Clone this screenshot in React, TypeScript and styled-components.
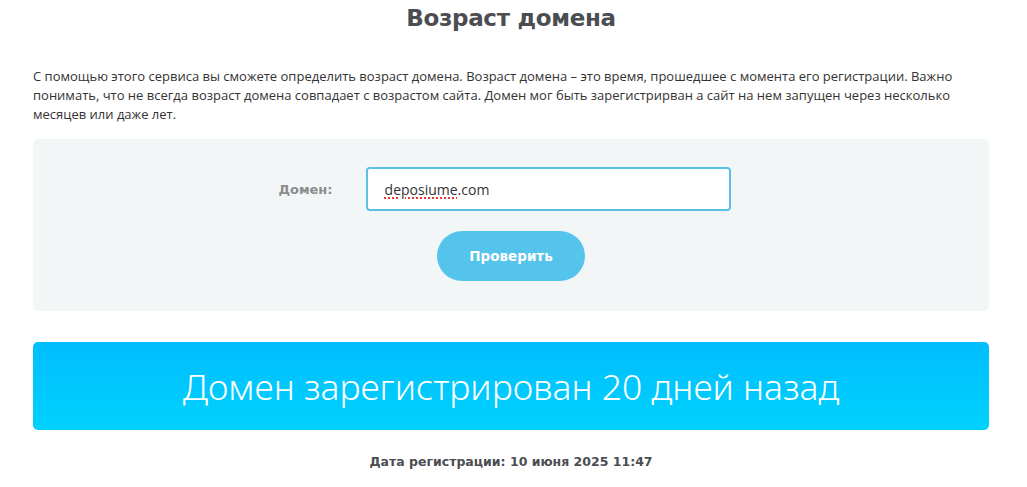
import styled, { createGlobalStyle } from 'styled-components';

const GlobalStyle = createGlobalStyle`
  html, body {
    margin: 0;
    padding: 0;
    background: #ffffff;
  }
  body {
    font-family: 'Open Sans', 'Liberation Sans', sans-serif;
    color: #333;
  }
`;

const Page = styled.div`
  padding: 0 38px 10px 33px;
`;

const Title = styled.h1`
  margin: 0;
  padding-top: 3px;
  text-align: center;
  font-family: 'DejaVu Sans', sans-serif;
  font-size: 23px;
  font-weight: 700;
  line-height: 30px;
  color: #4b4d52;
  letter-spacing: -0.3px;
`;

const Intro = styled.p`
  margin: 34px 0 0;
  font-size: 13px;
  line-height: 19px;
  color: #333;
`;

const FormPanel = styled.div`
  margin-top: 15px;
  background: #f3f6f7;
  border-radius: 5px;
  padding: 28px 0 30px;
  display: flex;
  flex-direction: column;
  align-items: center;
  gap: 20px;
`;

const FieldRow = styled.div`
  display: flex;
  align-items: center;
  gap: 33px;
  margin-left: -13px;
`;

const Label = styled.label`
  font-family: 'DejaVu Sans', sans-serif;
  font-size: 13px;
  font-weight: 700;
  color: #8a8c8f;
`;

const Input = styled.div`
  box-sizing: border-box;
  width: 365px;
  height: 44px;
  border: 2px solid #5bc0e8;
  border-radius: 4px;
  background: #fff;
  padding: 0 17px;
  display: flex;
  align-items: center;
  font-size: 14px;
  color: #333;
`;

const Misspelled = styled.span`
  text-decoration: underline dotted #e53935;
  text-underline-offset: 3px;
  text-decoration-thickness: 1.5px;
`;

const CheckButton = styled.button`
  width: 148px;
  height: 50px;
  border: none;
  border-radius: 25px;
  background: #55c4ec;
  color: #fff;
  font-family: 'DejaVu Sans', sans-serif;
  font-size: 13.5px;
  font-weight: 700;
  cursor: pointer;
`;

const ResultBanner = styled.div`
  margin-top: 31px;
  height: 88px;
  border-radius: 5px;
  background: linear-gradient(180deg, #00bdfd 0%, #00d2fe 100%);
  display: flex;
  align-items: center;
  justify-content: center;
  color: #fff;
  font-family: 'Noto Sans', sans-serif;
  font-size: 35.5px;
  font-weight: 300;
`;

const RegDate = styled.div`
  margin-top: 24px;
  text-align: center;
  font-family: 'DejaVu Sans', sans-serif;
  font-size: 12.5px;
  font-weight: 700;
  color: #4b4d52;
`;

export default function App() {
  return (
    <Page>
      <GlobalStyle />
      <Title>Возраст домена</Title>
      <Intro>
        С помощью этого сервиса вы сможете определить возраст домена. Возраст домена – это время,
        прошедшее с момента его регистрации. Важно понимать, что не всегда возраст домена совпадает
        с возрастом сайта. Домен мог быть зарегистрирван а сайт на нем запущен через несколько
        месяцев или даже лет.
      </Intro>
      <FormPanel>
        <FieldRow>
          <Label>Домен:</Label>
          <Input role="textbox">
            <Misspelled>deposiume</Misspelled>.com
          </Input>
        </FieldRow>
        <CheckButton>Проверить</CheckButton>
      </FormPanel>
      <ResultBanner>Домен зарегистрирован 20 дней назад</ResultBanner>
      <RegDate>Дата регистрации: 10 июня 2025 11:47</RegDate>
    </Page>
  );
}
